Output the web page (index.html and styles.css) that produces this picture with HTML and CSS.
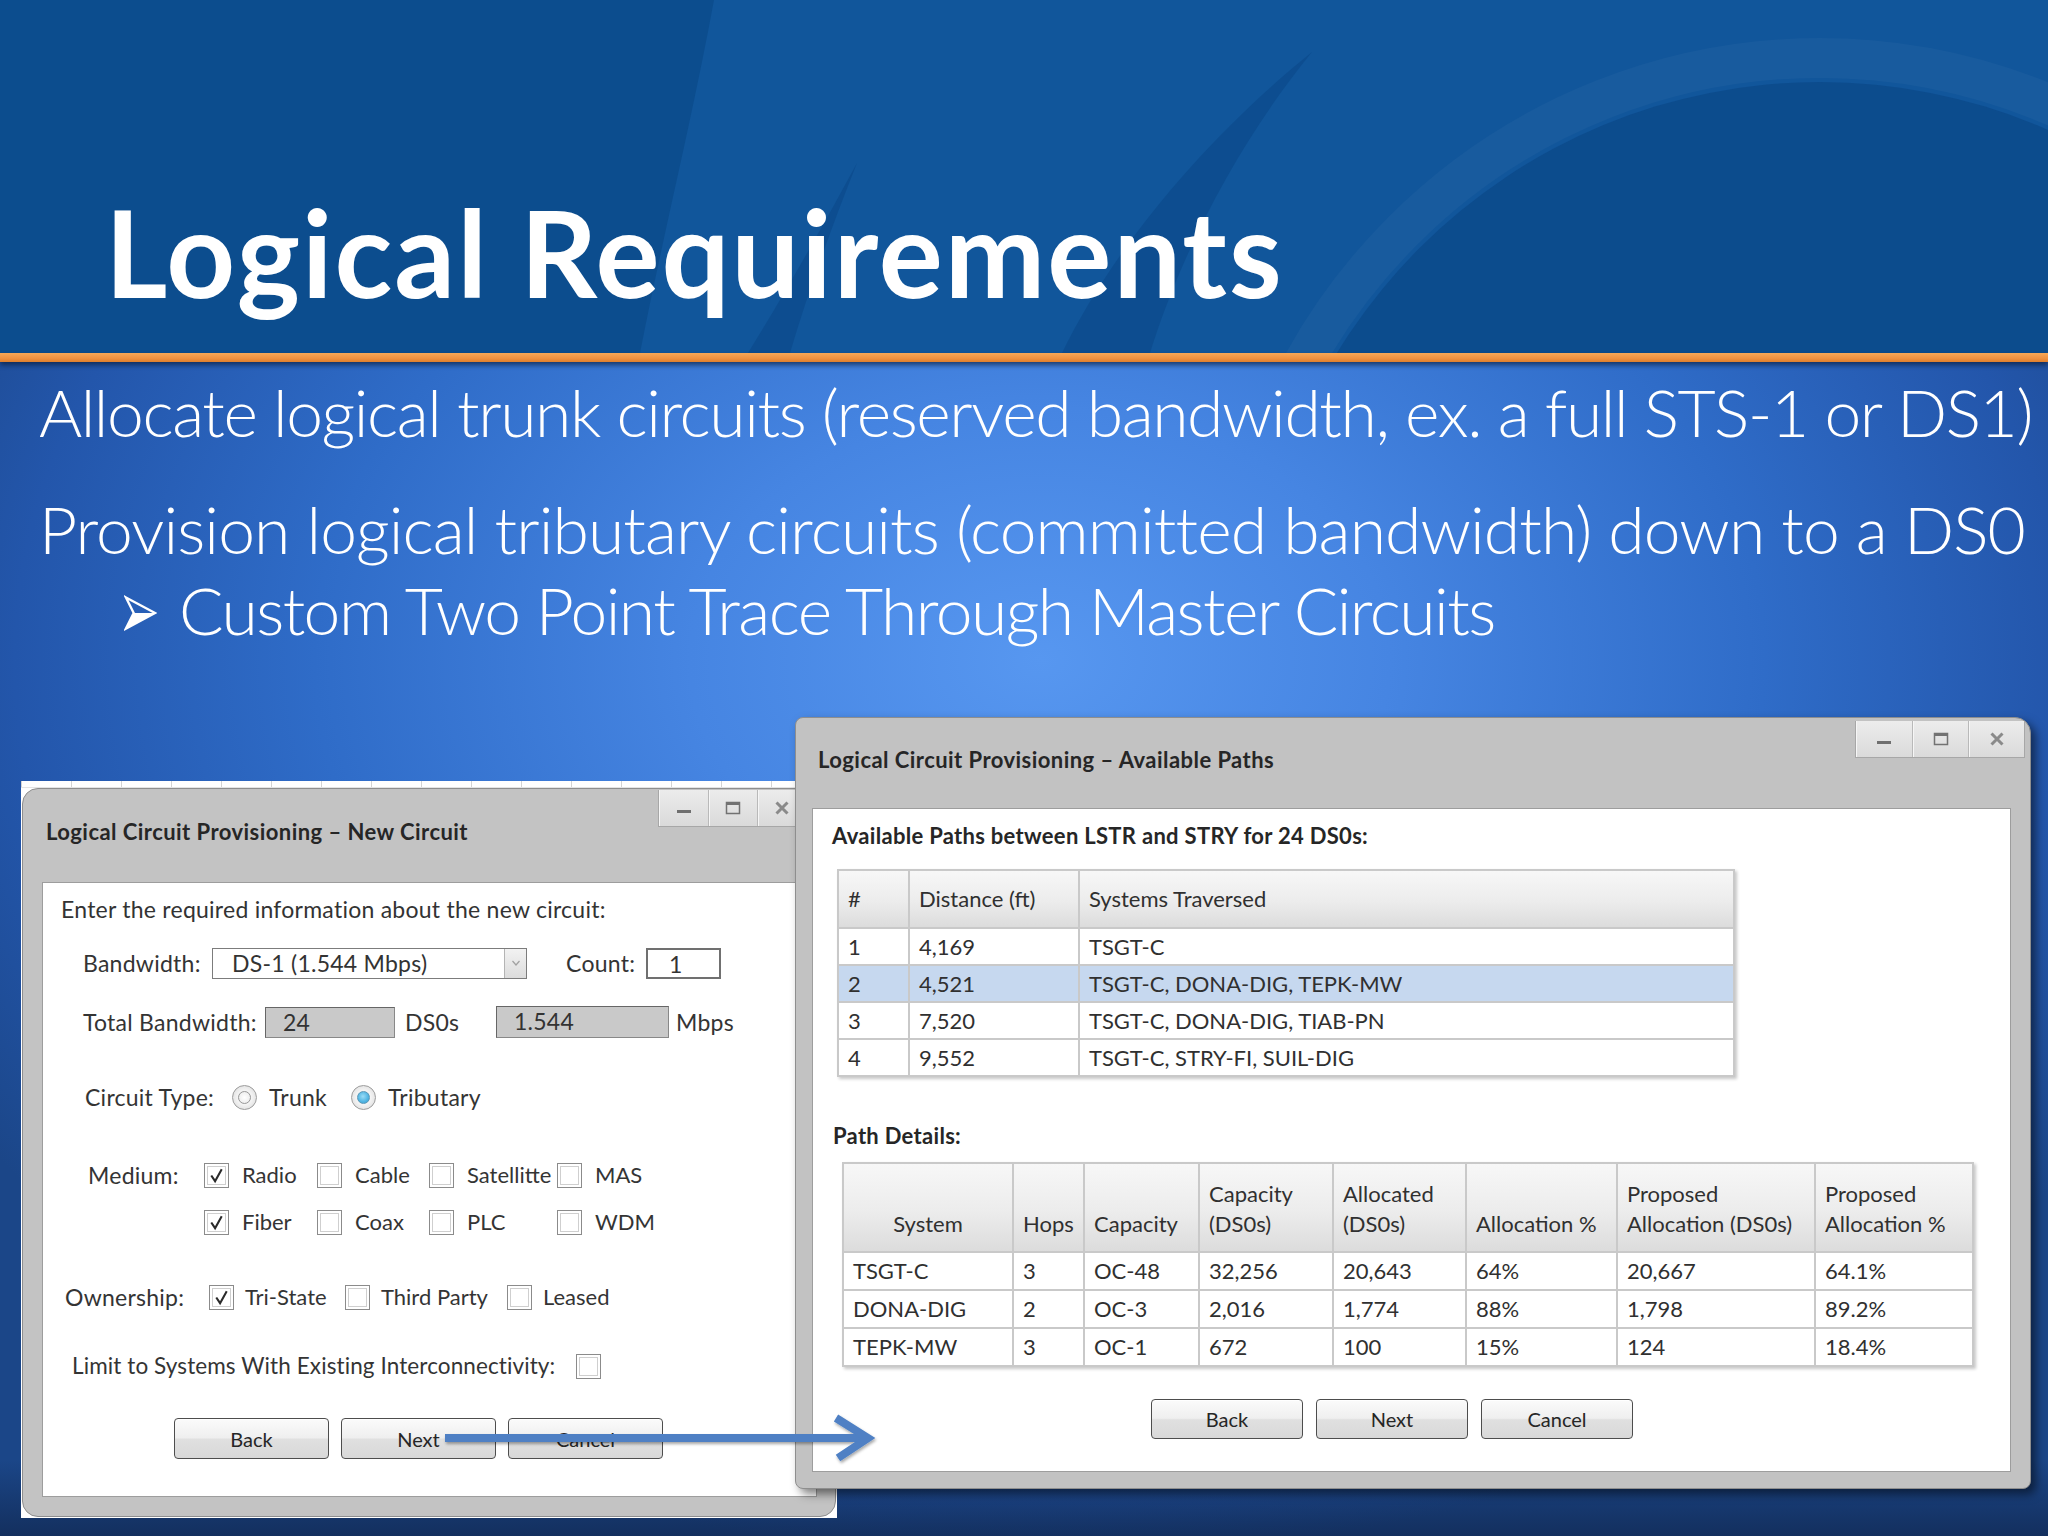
FILE: index.html
```html
<!DOCTYPE html>
<html lang="en">
<head>
<meta charset="utf-8">
<title>Logical Requirements</title>
<link rel="stylesheet" href="styles.css">
</head>
<body>
<div class="slide">
  <header class="top">
    <svg class="arcs" viewBox="0 0 2048 353" preserveAspectRatio="none" aria-hidden="true">
      <path d="M0 0 L714 0 C692 120 662 240 640 353 L0 353 Z" fill="#07427f" fill-opacity="0.45"/>
      <path d="M857 163 C822 228 782 298 748 353 L790 353 C808 292 832 226 857 163 Z" fill="#07427f" fill-opacity="0.4"/>
      <path d="M1312 52 C1205 138 1112 250 1062 353 L1150 353 C1182 250 1240 140 1312 52 Z" fill="#07427f" fill-opacity="0.4"/>
      <circle cx="1820" cy="648" r="590" fill="none" stroke="#ffffff" stroke-opacity="0.03" stroke-width="40"/>
      <circle cx="1820" cy="648" r="566" fill="#07427f" fill-opacity="0.5"/>
    </svg>
    <h1 class="title">Logical Requirements</h1>
  </header>
  <div class="rule"></div>

  <section class="bullets">
    <p class="line line-1">Allocate logical trunk circuits (reserved bandwidth, ex. a full STS-1 or DS1)</p>
    <p class="line line-2">Provision logical tributary circuits (committed bandwidth) down to a DS0</p>
    <p class="line sub">
      <svg class="bul" viewBox="0 0 34 36" aria-hidden="true">
        <path d="M10 18 L32 18 L2 34 Z" fill="#fff"/>
        <path d="M2 2 L32 18 L2 34 L10 18 Z" fill="none" stroke="#fff" stroke-width="2.4" stroke-linejoin="miter"/>
      </svg>
      <span>Custom Two Point Trace Through Master Circuits</span>
    </p>
  </section>

  <!-- left window -->
  <div class="shot-left">
    <div class="ticks"></div>
    <div class="frame frame-left">
      <div class="titlebar tb-left">
        <div class="wtitle wt-left">Logical Circuit Provisioning – New Circuit</div>
        <div class="controls ctl-left">
          <div class="cbtn"><svg viewBox="0 0 20 20"><rect x="3" y="12" width="14" height="3" fill="#6f6f6f"/></svg></div>
          <div class="cbtn"><svg viewBox="0 0 20 20"><rect x="3.5" y="4.5" width="13" height="11" fill="none" stroke="#727272" stroke-width="1.5"/><rect x="3" y="4" width="14" height="3" fill="#727272"/></svg></div>
          <div class="cbtn"><svg viewBox="0 0 20 20"><path d="M4.5 4.5 L15.5 15.5 M15.5 4.5 L4.5 15.5" stroke="#8a8a8a" stroke-width="3"/></svg></div>
        </div>
      </div>
      <div class="panel panel-left">
        <div class="intro">Enter the required information about the new circuit:</div>

        <div class="row r-bw">
          <span class="lbl w-bw">Bandwidth:</span>
          <div class="select">
            <span class="sel-text">DS-1 (1.544 Mbps)</span>
            <span class="sel-btn"><svg viewBox="0 0 12 12"><path d="M2.5 4 L6 8 L9.5 4" fill="none" stroke="#a0a0a0" stroke-width="1.2"/></svg></span>
          </div>
          <span class="lbl w-cnt">Count:</span>
          <div class="field cnt-in">1</div>
        </div>

        <div class="row r-tot">
          <span class="lbl w-tot">Total Bandwidth:</span>
          <div class="field ro f-ds0">24</div>
          <span class="lbl w-ds0">DS0s</span>
          <div class="field ro f-mbps">1.544</div>
          <span class="lbl mbps">Mbps</span>
        </div>

        <div class="row r-type">
          <span class="lbl w-type">Circuit Type:</span>
          <span class="radio"><span class="dot"></span></span>
          <span class="lbl w-trunk">Trunk</span>
          <span class="radio on"><span class="dot"></span></span>
          <span class="lbl rlbl">Tributary</span>
        </div>

        <div class="grid medium">
          <span class="lbl">Medium:</span>
          <span class="cb on"><svg viewBox="0 0 20 20"><path d="M4.5 10 L8.5 16 L15.5 3.5" fill="none" stroke="#2a2a2a" stroke-width="2.2"/></svg></span>
          <span class="lbl opt">Radio</span>
          <span class="cb"></span>
          <span class="lbl opt">Cable</span>
          <span class="cb"></span>
          <span class="lbl opt">Satellitte</span>
          <span class="cb"></span>
          <span class="lbl opt">MAS</span>

          <span class="lbl"></span>
          <span class="cb on"><svg viewBox="0 0 20 20"><path d="M4.5 10 L8.5 16 L15.5 3.5" fill="none" stroke="#2a2a2a" stroke-width="2.2"/></svg></span>
          <span class="lbl opt">Fiber</span>
          <span class="cb"></span>
          <span class="lbl opt">Coax</span>
          <span class="cb"></span>
          <span class="lbl opt">PLC</span>
          <span class="cb"></span>
          <span class="lbl opt">WDM</span>
        </div>

        <div class="grid owner">
          <span class="lbl">Ownership:</span>
          <span class="cb on"><svg viewBox="0 0 20 20"><path d="M4.5 10 L8.5 16 L15.5 3.5" fill="none" stroke="#2a2a2a" stroke-width="2.2"/></svg></span>
          <span class="lbl opt2">Tri-State</span>
          <span class="cb"></span>
          <span class="lbl opt2">Third Party</span>
          <span class="cb"></span>
          <span class="lbl opt2">Leased</span>
        </div>

        <div class="row r-limit">
          <span class="lbl w-limit">Limit to Systems With Existing Interconnectivity:</span>
          <span class="cb"></span>
        </div>

        <div class="btns btns-left">
          <div class="btn">Back</div>
          <div class="btn">Next</div>
          <div class="btn">Cancel</div>
        </div>
      </div>
    </div>
  </div>

  <!-- right window -->
  <div class="frame frame-right">
    <div class="titlebar tb-right">
      <div class="wtitle wt-right">Logical Circuit Provisioning – Available Paths</div>
      <div class="controls ctl-right">
        <div class="cbtn"><svg viewBox="0 0 20 20"><rect x="3" y="12" width="14" height="3" fill="#6f6f6f"/></svg></div>
        <div class="cbtn"><svg viewBox="0 0 20 20"><rect x="3.5" y="4.5" width="13" height="11" fill="none" stroke="#727272" stroke-width="1.5"/><rect x="3" y="4" width="14" height="3" fill="#727272"/></svg></div>
        <div class="cbtn"><svg viewBox="0 0 20 20"><path d="M4.5 4.5 L15.5 15.5 M15.5 4.5 L4.5 15.5" stroke="#8a8a8a" stroke-width="3"/></svg></div>
      </div>
    </div>
    <div class="panel panel-right">
      <div class="heading h-paths">Available Paths between LSTR and STRY for 24 DS0s:</div>
      <table class="grid-table t-paths">
        <colgroup><col class="c1"><col class="c2"><col class="c3"></colgroup>
        <thead><tr><th>#</th><th>Distance (ft)</th><th>Systems Traversed</th></tr></thead>
        <tbody>
          <tr><td>1</td><td>4,169</td><td>TSGT-C</td></tr>
          <tr class="sel"><td>2</td><td>4,521</td><td>TSGT-C, DONA-DIG, TEPK-MW</td></tr>
          <tr><td>3</td><td>7,520</td><td>TSGT-C, DONA-DIG, TIAB-PN</td></tr>
          <tr><td>4</td><td>9,552</td><td>TSGT-C, STRY-FI, SUIL-DIG</td></tr>
        </tbody>
      </table>

      <div class="heading h-details">Path Details:</div>
      <table class="grid-table t-details">
        <colgroup>
          <col class="d1"><col class="d2"><col class="d3"><col class="d4">
          <col class="d5"><col class="d6"><col class="d7"><col class="d8">
        </colgroup>
        <thead>
          <tr>
            <th class="center">System</th>
            <th>Hops</th>
            <th>Capacity</th>
            <th>Capacity<br>(DS0s)</th>
            <th>Allocated<br>(DS0s)</th>
            <th>Allocation %</th>
            <th>Proposed<br>Allocation (DS0s)</th>
            <th>Proposed<br>Allocation %</th>
          </tr>
        </thead>
        <tbody>
          <tr><td>TSGT-C</td><td>3</td><td>OC-48</td><td>32,256</td><td>20,643</td><td>64%</td><td>20,667</td><td>64.1%</td></tr>
          <tr><td>DONA-DIG</td><td>2</td><td>OC-3</td><td>2,016</td><td>1,774</td><td>88%</td><td>1,798</td><td>89.2%</td></tr>
          <tr><td>TEPK-MW</td><td>3</td><td>OC-1</td><td>672</td><td>100</td><td>15%</td><td>124</td><td>18.4%</td></tr>
        </tbody>
      </table>

      <div class="btns btns-right">
        <div class="btn">Back</div>
        <div class="btn">Next</div>
        <div class="btn">Cancel</div>
      </div>
    </div>
  </div>

  <svg class="flow" viewBox="0 0 440 60" aria-hidden="true">
    <defs>
      <filter id="sh" x="-5%" y="-40%" width="110%" height="180%">
        <feDropShadow dx="1" dy="2" stdDeviation="1.5" flood-color="#000" flood-opacity="0.35"/>
      </filter>
    </defs>
    <g filter="url(#sh)" stroke="#4f80c4" fill="none">
      <path d="M5 28 L428 28" stroke-width="8"/>
      <path d="M396 8 L428 28 L398 48" stroke-width="8" stroke-linejoin="miter" stroke-linecap="butt"/>
    </g>
  </svg>
</div>
</body>
</html>
```

FILE: styles.css
```css
* { box-sizing: border-box; }
html, body { margin: 0; padding: 0; }
body {
  width: 2048px;
  height: 1536px;
  overflow: hidden;
  font-family: "Lato", "Open Sans", "DejaVu Sans", sans-serif;
  background: #1a447f;
}

.slide {
  position: relative;
  width: 2048px;
  height: 1536px;
  overflow: hidden;
  background:
    linear-gradient(180deg, rgba(14, 32, 66, 0) 0, rgba(14, 32, 66, 0) 1460px, rgba(14, 32, 66, 0.6) 1536px),
    radial-gradient(ellipse 1250px 900px at 1040px 660px, #5797f0 0%, #4685e2 28%, #2f6cc8 58%, #2356ab 82%, #1b4688 100%);
}

/* ---------- header ---------- */
.top {
  position: relative;
  height: 353px;
  background: #11569b;
  display: flex;
  align-items: flex-end;
  padding: 0 0 41px 105px;
  overflow: hidden;
}
.arcs {
  position: absolute;
  left: 0;
  top: 0;
  width: 2048px;
  height: 353px;
}
.title {
  position: relative;
  margin: 0;
  color: #fff;
  font-family: "Lato", "DejaVu Sans", sans-serif;
  font-weight: 700;
  font-size: 120px;
  line-height: 120px;
  letter-spacing: 2px;
}
.rule {
  position: relative;
  height: 9px;
  background: linear-gradient(180deg, #f7a857 0%, #ef9140 60%, #de7f2d 100%);
  box-shadow: 0 3px 5px rgba(8, 24, 52, 0.65);
}

/* ---------- bullets ---------- */
.bullets {
  padding: 10px 0 0 39px;
  color: #fff;
}
.line {
  margin: 0;
  font-family: "Lato", "DejaVu Sans", sans-serif;
  font-weight: 300;
  font-size: 66px;
  line-height: 80px;
  white-space: nowrap;
}
.line-1 { letter-spacing: -1.4px; }
.line-2 { margin-top: 37px; letter-spacing: -0.9px; }
.sub {
  margin-top: 1px;
  padding-left: 85px;
  display: flex;
  align-items: center;
  gap: 22px;
  letter-spacing: -1.55px;
}
.bul {
  width: 33px;
  height: 36px;
  flex: none;
  margin-top: 6px;
}

/* ---------- window chrome ---------- */
.shot-left {
  position: absolute;
  left: 21px;
  top: 781px;
  width: 816px;
  height: 737px;
  background: #fff;
}
.ticks {
  height: 7px;
  background:
    repeating-linear-gradient(90deg, #d4d4d4 0 1px, transparent 1px 50px);
  border-bottom: 1px solid #e4e4e4;
}
.frame {
  background: #c3c3c3;
  border: 1px solid #8e8e8e;
  display: flex;
  flex-direction: column;
  color: #2e2e2e;
}
.frame-left {
  margin-left: 1px;
  width: 814px;
  height: 729px;
  border-radius: 16px 0 16px 16px;
  padding: 0 18px 19px 19px;
}
.frame-right {
  position: absolute;
  left: 795px;
  top: 717px;
  width: 1236px;
  height: 772px;
  border-radius: 8px 16px 8px 8px;
  padding: 0 19px 16px 16px;
  box-shadow: 5px 5px 10px rgba(0, 0, 0, 0.5);
  background: #c2c2c2;
}
.titlebar {
  display: flex;
  justify-content: space-between;
  align-items: flex-start;
  flex: none;
}
.tb-left { height: 93px; }
.tb-right { height: 90px; }
.wtitle {
  font-weight: 700;
  font-size: 22px;
  line-height: 24px;
  letter-spacing: 0.45px;
  color: #262626;
  white-space: nowrap;
}
.wt-left { margin: 31px 0 0 4px; }
.wt-right { margin: 30px 0 0 6px; }

.controls {
  display: flex;
  border: 1px solid #a7a7a7;
  border-top: none;
  background: linear-gradient(180deg, #ececec 0%, #dadada 100%);
}
.ctl-left { margin: 1px 10px 0 0; }
.ctl-right { margin: 3px -14px 0 0; }
.cbtn {
  height: 36px;
  display: flex;
  align-items: center;
  justify-content: center;
  border-left: 1px solid #b9b9b9;
  box-shadow: inset 1px 0 0 #f6f6f6;
}
.cbtn:first-child { border-left: none; }
.ctl-left .cbtn { width: 49px; }
.ctl-right .cbtn { width: 56px; }
.cbtn svg { width: 20px; height: 20px; }

.panel {
  flex: 1;
  background: #fff;
  border: 1px solid #9d9d9d;
}

/* ---------- left panel ---------- */
.panel-left {
  padding-top: 11px;
  font-size: 23px;
  letter-spacing: 0.25px;
  color: #333;
}
.lbl {
  display: inline-block;
  white-space: nowrap;
  font-size: 23px;
  line-height: 30px;
  color: #343434;
}
.intro {
  padding-left: 18px;
  line-height: 30px;
  white-space: nowrap;
}
.row {
  display: flex;
  align-items: center;
  height: 32px;
}
.r-bw { margin-top: 23px; padding-left: 40px; }
.w-bw { width: 129px; }
.select {
  width: 315px;
  height: 31px;
  border: 1px solid #7c7c7c;
  display: flex;
  background: #fff;
}
.sel-text {
  flex: 1;
  padding-left: 19px;
  line-height: 29px;
  white-space: nowrap;
}
.sel-btn {
  width: 22px;
  background: linear-gradient(180deg, #f2f2f2, #dcdcdc);
  border-left: 1px solid #b4b4b4;
  display: flex;
  align-items: center;
  justify-content: center;
}
.sel-btn svg { width: 12px; height: 12px; }
.w-cnt { width: 80px; margin-left: 39px; }
.field {
  height: 31px;
  line-height: 28px;
  border: 1px solid #6f6f6f;
  white-space: nowrap;
}
.cnt-in {
  width: 75px;
  padding-left: 21px;
  border: 2px solid #707070;
  background: #fff;
}
.ro {
  background: #c9c9c9;
  border-color: #666 #888 #888 #666;
  padding-left: 17px;
}
.r-tot { margin-top: 27px; padding-left: 40px; }
.w-tot { width: 182px; }
.f-ds0 { width: 130px; }
.w-ds0 { width: 91px; margin-left: 10px; }
.f-mbps { width: 173px; height: 32px; }
.mbps { margin-left: 7px; }

.r-type { margin-top: 43px; padding-left: 42px; }
.w-type { width: 147px; }
.w-trunk { width: 82px; margin-left: 12px; }
.rlbl { margin-left: 12px; }
.radio {
  width: 25px;
  height: 25px;
  border-radius: 50%;
  border: 1px solid #9c9c9c;
  background: radial-gradient(circle, #ffffff 0%, #f3f3f3 45%, #d6d6d6 100%);
  display: flex;
  align-items: center;
  justify-content: center;
  flex: none;
}
.dot {
  width: 13px;
  height: 13px;
  border-radius: 50%;
  border: 1px solid #979797;
  background: radial-gradient(circle, #ffffff 0%, #e8e8e8 100%);
}
.radio.on .dot {
  border-color: #5a97b6;
  background: radial-gradient(circle at 45% 40%, #9bdcf6 0%, #4fb4e2 60%, #3a9ccc 100%);
}

.grid {
  display: grid;
  align-items: center;
}
.medium {
  margin-top: 46px;
  padding-left: 45px;
  grid-template-columns: 116px 25px 88px 25px 87px 25px 103px 25px auto;
  grid-auto-rows: 32px;
  row-gap: 15px;
}
.opt { padding-left: 13px; font-size: 22px; letter-spacing: 0; }
.owner {
  margin-top: 43px;
  padding-left: 22px;
  grid-template-columns: 144px 25px 111px 25px 137px 25px auto;
  grid-auto-rows: 32px;
}
.opt2 { padding-left: 11px; font-size: 22px; letter-spacing: 0; }
.cb {
  width: 25px;
  height: 25px;
  border: 1px solid #8b8b8b;
  background: #fff;
  box-shadow: inset 0 0 0 2px #fff, inset 0 0 0 3px #cfcfcf;
  display: flex;
  align-items: center;
  justify-content: center;
}
.cb svg { width: 19px; height: 19px; }
.r-limit { margin-top: 37px; padding-left: 29px; }
.w-limit { width: 504px; font-size: 22.5px; letter-spacing: 0.1px; }

/* buttons */
.btns { display: flex; }
.btns-left { margin-top: 36px; padding-left: 131px; gap: 12px; }
.btns-left .btn { width: 155px; height: 41px; }
.btn {
  border: 1px solid #4d4d4d;
  border-radius: 4px;
  background: linear-gradient(180deg, #fbfbfb 0%, #efefef 48%, #e0e0e0 52%, #d8d8d8 100%);
  box-shadow: inset 0 1px 0 #ffffff;
  display: flex;
  align-items: center;
  justify-content: center;
  font-size: 20px;
  letter-spacing: 0;
  color: #262626;
}

/* ---------- right panel ---------- */
.panel-right {
  padding-top: 12px;
}
.heading {
  font-weight: 700;
  font-size: 22px;
  line-height: 30px;
  letter-spacing: 0.3px;
  color: #262626;
  white-space: nowrap;
}
.h-paths { padding-left: 19px; }
.h-details { padding-left: 20px; margin-top: 44px; }

.grid-table {
  border-collapse: collapse;
  table-layout: fixed;
  border: 2px solid #a9a9a9;
  box-shadow: 2px 2px 3px rgba(0, 0, 0, 0.22);
  font-size: 22px;
  color: #303030;
}
.grid-table th,
.grid-table td {
  border: 2px solid #c9c9c9;
  padding: 0 0 0 9px;
  text-align: left;
  font-weight: 400;
  white-space: nowrap;
  overflow: hidden;
}
.grid-table th {
  background: linear-gradient(180deg, #f7f7f7 0%, #ececec 55%, #dcdcdc 100%);
}
.t-paths {
  margin: 18px 0 0 24px;
  width: 896px;
}
.t-paths .c1 { width: 71px; }
.t-paths .c2 { width: 170px; }
.t-paths .c3 { width: 655px; }
.t-paths thead tr { height: 58px; }
.t-paths tbody tr { height: 37px; }
.t-paths th { line-height: 30px; }
.t-paths td { line-height: 30px; }
.t-paths tr.sel td { background: #c6d8ef; }

.t-details {
  margin: 11px 0 0 29px;
  width: 1130px;
}
.t-details .d1 { width: 170px; }
.t-details .d2 { width: 71px; }
.t-details .d3 { width: 115px; }
.t-details .d4 { width: 134px; }
.t-details .d5 { width: 133px; }
.t-details .d6 { width: 151px; }
.t-details .d7 { width: 198px; }
.t-details .d8 { width: 158px; }
.t-details thead tr { height: 89px; }
.t-details th {
  vertical-align: bottom;
  line-height: 30px;
  padding-bottom: 12px;
}
.t-details th.center { text-align: center; padding-left: 0; }
.t-details tbody tr { height: 38px; }
.t-details td { line-height: 30px; }

.btns-right { margin-top: 32px; padding-left: 338px; gap: 13px; }
.btns-right .btn { width: 152px; height: 40px; }

/* ---------- flow arrow ---------- */
.flow {
  position: absolute;
  left: 440px;
  top: 1410px;
  width: 440px;
  height: 60px;
}
```
